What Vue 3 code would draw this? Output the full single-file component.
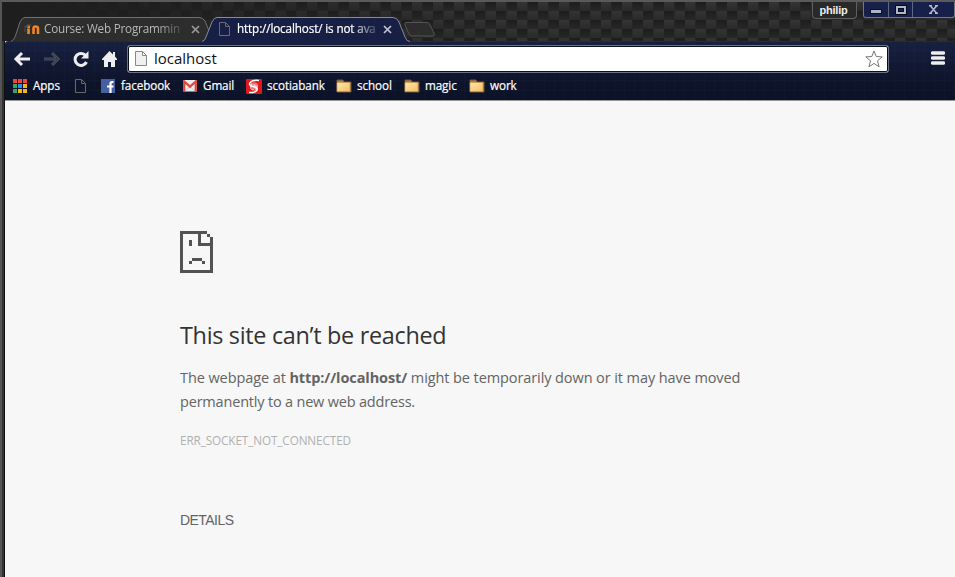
<script setup>
const folders = [
  { name: 'school', width: 68 },
  { name: 'magic', width: 65 },
  { name: 'work', width: 60 },
]
const appColors = ['#f04437', '#f04437', '#f04437', '#35a462', '#2d8cf0', '#f6b417', '#35a462', '#f6b417', '#f6b417']
const error = { title: 'This site can’t be reached', host: 'http://localhost/', code: 'ERR_SOCKET_NOT_CONNECTED' }
</script>

<template>
  <div class="window">
    <header class="titlebar">
      <svg class="weave" width="953" height="39" aria-hidden="true">
        <defs>
          <linearGradient id="dark" x2="0" y2="1"><stop stop-color="#1d1d1d" /><stop offset="1" stop-color="#282828" /></linearGradient>
          <linearGradient id="light" x2="0" y2="1"><stop stop-color="#343434" /><stop offset="1" stop-color="#2a2a2a" /></linearGradient>
          <linearGradient id="shade"><stop stop-color="#1e1e1e" /><stop offset=".12" stop-color="#1e1e1e" stop-opacity=".85" /><stop offset=".5" stop-color="#1e1e1e" stop-opacity="0" /></linearGradient>
          <pattern id="carbon" width="21" height="18" x="11" y="0" patternUnits="userSpaceOnUse">
            <rect width="21" height="18" fill="#252525" />
            <rect width="10.5" height="9" fill="url(#light)" /><rect x="10.5" width="10.5" height="9" fill="url(#dark)" />
            <rect y="9" width="10.5" height="9" fill="url(#dark)" /><rect x="10.5" y="9" width="10.5" height="9" fill="url(#light)" />
          </pattern>
        </defs>
        <rect width="953" height="39" fill="url(#carbon)" />
        <rect width="953" height="39" fill="url(#shade)" />
      </svg>
      <div class="tabs">
        <div class="tab inactive">
          <svg class="tab-shape" width="200" height="25" viewBox="0 0 200 25"><path d="M0 24.5C3 23 4 20 5 17L9 5Q11 .5 14 .5H188Q192 .5 194 4L200 19Q201 23 204 24.5" fill="#2d2d2d" stroke="#707070" /></svg>
          <svg class="moodle" width="17" height="12" viewBox="0 0 17 12"><path d="M1 4 5 1l4 1-4 2Z" fill="#554c43" /><path d="M2 4v5" stroke="#59483a" /><path d="M5.5 11V5.5Q5.5 4 7 4M10.5 11V5.5Q10.5 3.500 12.700 3.500T15 5.500V11" fill="none" stroke="#f58220" stroke-width="2.600" /><path d="M4 5.500h3" stroke="#8b5327" /></svg>
          <span class="tab-title">Course: Web Programmin</span>
          <svg class="close" width="9" height="9" viewBox="0 0 9 9"><path d="m1 1 7 7m0-7-7 7" stroke="#999" stroke-width="1.700" /></svg>
        </div>
        <div class="tab active">
          <svg class="tab-shape" width="209" height="26" viewBox="0 0 209 26"><path d="M0 24.5Q3 24 4 20L10 5Q12 .5 15 .5H191Q195 .5 197 5L203 20Q204 24 208 24.5V26H0Z" fill="#172044" /><path d="M0 24.5Q3 24 4 20L10 5Q12 .5 15 .5H191Q195 .5 197 5L203 20Q204 24 208 24.5" fill="none" stroke="#858b9e" /></svg>
          <svg class="page" width="11" height="14" viewBox="0 0 11 14"><path d="M.5.5h6l4 4v9H.5Zm6 0v4h4" fill="none" stroke="#686b72" /></svg>
          <span class="tab-title">http://localhost/ is not ava</span>
          <svg class="close" width="9" height="9" viewBox="0 0 9 9"><path d="m1 1 7 7m0-7-7 7" stroke="#c0c4d1" stroke-width="1.700" /></svg>
        </div>
        <svg class="new-tab" width="31" height="15" viewBox="0 0 31 15"><path d="M2 .5H23Q25 .5 26 3L30 11Q31 14 29 14H8Q6 14 5 12L1 3Q0 1 2 .5Z" fill="#2d2d2d" stroke="#555" /></svg>
      </div>
      <div class="profile">philip</div>
      <div class="controls">
        <span><svg class="minimize" width="12" height="6"><rect x=".5" y=".5" width="11" height="4" fill="#aeb3c2" stroke="#0a0f22" /></svg></span>
        <span><svg width="12" height="10"><rect x="2" y="2" width="8" height="6" fill="none" stroke="#050b20" stroke-width="4" /><rect x="2" y="2" width="8" height="6" fill="none" stroke="#b2b6c3" stroke-width="2" /></svg></span>
        <span><svg width="11" height="9" viewBox="0 0 11 9"><path d="m2.500 1 6 7M8.500 1l-6 7M1 .8h3m3 0h3M1 8.200h3m3 0h3" stroke="#b2b6c5" stroke-width="1.600" /></svg></span>
      </div>
    </header>

    <section class="chrome">
      <nav class="toolbar">
        <svg class="nav back" width="16" height="14" viewBox="0 0 16 14"><path d="M8 1 2 7l6 6M2 7h14" fill="none" stroke="#eee" stroke-width="3" /></svg>
        <svg class="nav forward" width="16" height="14" viewBox="0 0 16 14"><path d="m8 1 6 6-6 6M0 7h14" fill="none" stroke="#4b5060" stroke-width="3" /><path d="m8 1 6 6-6 6M0 7h14" fill="none" stroke="#303748" /></svg>
        <svg class="nav reload" width="16" height="16" viewBox="0 0 16 16"><path d="M13 5A6 6 0 1 0 13.500 11" fill="none" stroke="#eee" stroke-width="3" /><path d="M15.500 0v7.500H8Z" fill="#eee" /></svg>
        <svg class="nav home" width="15" height="16" viewBox="0 0 15 16"><path d="M0 8 7.500 0 11 3.500V1h2v4.500L15 8v1h-2v7H9v-5H6v5H2V9H0Z" fill="#eee" /></svg>
        <div class="address">
          <svg class="address-page" width="12" height="15" viewBox="0 0 12 15"><path d="M.5.5h7l4 4v10H.5Zm7 0v4h4" fill="#f0f0f0" stroke="#888" /></svg>
          <span class="url">localhost</span>
          <svg class="star" width="18" height="18" viewBox="0 0 18 18"><path d="m9 1 2.200 5.500 6 .4-4.700 3.900 1.600 6L9 13.400 3.900 16.800l1.600-6L.8 6.900l6-.4Z" fill="#fff" stroke="#777" stroke-linejoin="round" /></svg>
        </div>
        <svg class="menu" width="14" height="15"><path d="M1.500 2h11M1.500 7h11M1.500 12h11" stroke="#eee" stroke-width="3.500" stroke-linecap="round" /></svg>
      </nav>
      <nav class="bookmarks">
        <a class="apps"><span class="apps-grid"><i v-for="(color, i) in appColors" :key="i" :style="{ background: color }"></i></span><span class="label">Apps</span></a>
        <a class="blank"><svg width="11" height="14" viewBox="0 0 11 14"><path d="M.5.5h6l4 4v9H.5Zm6 0v4h4" fill="none" stroke="#686868" /></svg></a>
        <a class="facebook"><svg width="14" height="14" viewBox="0 0 14 14"><rect width="14" height="14" fill="#4460a0" /><path d="M12.500 3H11Q9.500 3 9.500 4.500V14M6 7.500h6.500" fill="none" stroke="#fff" stroke-width="2.200" /></svg><span class="label">facebook</span></a>
        <a class="gmail"><svg width="14" height="12" viewBox="0 0 14 12"><rect width="14" height="11.500" rx="1" fill="#eee" /><path d="m2 11 5-4.500L12 11" fill="none" stroke="#ccc" /><path d="M1.200 11.500V1.500L7 6.700l5.800-5.200v10" fill="none" stroke="#dd4b3e" stroke-width="2.300" /></svg><span class="label">Gmail</span></a>
        <a class="scotia"><svg width="16" height="15" viewBox="0 0 16 15"><rect width="16" height="15" rx="1" fill="#e0191f" /><circle cx="8" cy="7.500" r="4" fill="#f4b5b8" /><path d="M13 1.500Q7 .8 4.500 3.200T6 7.500q4 0 5 2t-2.500 3.500q-2 .8-5.500.5" fill="none" stroke="#fff" stroke-width="1.500" /><path d="M6 5q3-1.500 5 1M5 9q3-1 4 2" fill="none" stroke="#e74a50" /></svg><span class="label">scotiabank</span></a>
        <a v-for="folder in folders" :key="folder.name" class="folder" :style="{ width: folder.width + 'px' }">
          <svg width="16" height="14" viewBox="0 0 16 14"><defs><linearGradient id="folder-fill" x2="1" y2="1"><stop stop-color="#ffe9ac" /><stop offset="1" stop-color="#f5bd66" /></linearGradient></defs><path d="M1 3V1h6l1 2h7v10H1Z" fill="#a58558" stroke="#725839" /><path d="M1 3.500h13v9H1Z" fill="url(#folder-fill)" stroke="#c98d45" stroke-width=".6" /></svg>
          <span class="label">{{ folder.name }}</span>
        </a>
      </nav>
    </section>

    <main class="content">
      <svg class="sad-page" width="33" height="42" viewBox="0 0 33 42" shape-rendering="crispEdges"><path d="M0 0h27v3H3v36h27V15H18V3h3v9h9V6h3v36H0ZM27 3h3v3h-3ZM9 9h3v6H9Zm3 18h10v3H12Zm-3 3h3v3H9Zm13 0h3v3h-3Z" fill="#535353" /></svg>
      <h1>{{ error.title }}</h1>
      <p>The webpage at <strong>{{ error.host }}</strong> might be temporarily down or it may have moved<br><span class="second-line">permanently to a new web address.</span></p>
      <div class="code">{{ error.code }}</div>
      <button>DETAILS</button>
    </main>
  </div>
</template>

<style>
body { background: #f7f7f7; }
</style>
<style scoped>
* { box-sizing: border-box; }
.window { width: 955px; height: 577px; overflow: hidden; display: flex; flex-direction: column; padding-left: 5px; background: linear-gradient(90deg, #555 0 2px, #333 2px 4px, #111 4px 5px) left / 5px 100% no-repeat; font-family: "Open Sans", "Noto Sans", sans-serif; white-space: nowrap; }
.titlebar { position: relative; height: 41px; display: flex; flex: none; border-top: 2px solid #5a5a5a; margin-left: -3px; padding-left: 3px; background: #202020; }
.weave { position: absolute; left: 0; top: 0; width: 953px; }
.tabs { position: relative; display: flex; align-items: flex-start; padding: 15px 0 0 6px; width: 807px; }
.tab { position: relative; display: flex; align-items: center; height: 24px; font-size: 11.7px; }
.tab-shape { position: absolute; left: 0; top: 0; overflow: visible; }
.tab > :not(.tab-shape) { position: relative; }
.tab .close { flex: none; }
.inactive { width: 191px; padding-left: 12px; color: #b8b8b8; }
.inactive .tab-title { width: 138px; margin: 0 9px 0 4px; letter-spacing: -.2px; }
.active { width: 203px; padding-left: 17px; color: #fff; z-index: 1; }
.active .tab-title { width: 139px; margin: 0 7px 0 7px; letter-spacing: -.13px; -webkit-text-stroke: .2px #fff; }
.tab-title { mask-image: linear-gradient(90deg, #000 82%, rgba(0,0,0,.2)); line-height: 18px; padding-bottom: 2px; }
.new-tab { margin-top: 5px; margin-left: -1px; }
.profile { position: relative; width: 45px; height: 17px; display: flex; justify-content: center; align-items: center; padding-right: 2px; border: 1px solid #606060; border-top: 0; border-radius: 0 0 4px 4px; background: #292929; color: #eee; font: bold 11px "Liberation Sans", sans-serif; letter-spacing: -.2px; }
.controls { position: relative; display: flex; margin-left: 6px; height: 16px; width: 92px; border: 1px solid #737785; border-top: 0; border-radius: 0 0 3px 3px; background: #17204a; }
.controls span { display: flex; align-items: center; justify-content: center; width: 25px; border-right: 1px solid #606781; }
.controls span:last-child { width: 41px; border: 0; }
.controls .minimize { margin-top: 4px; }
.chrome { height: 60px; flex: none; border-top: 1px solid #202a4c; border-bottom: 1px solid #999; background: repeating-linear-gradient(90deg, transparent 0 9px, rgba(100,120,170,.04) 9px 10px), repeating-linear-gradient(0deg, transparent 0 9px, rgba(100,120,170,.04) 9px 10px), linear-gradient(#172040, #0e152c 60%, #0c1226); border-radius: 3px 0 0; }
.toolbar { display: flex; align-items: center; height: 33px; padding-left: 9px; }
.nav { overflow: visible; flex: none; }
.forward { margin-left: 14px; }
.reload { margin-left: 13px; }
.home { margin-left: 13px; }
.address { display: flex; align-items: center; flex: none; width: 762px; height: 28px; margin-left: 10px; padding: 0 5px 0 7px; border: 1px solid #697087; outline: 1px solid #0a0f20; outline-offset: -2px; border-radius: 3px; background: #fff; color: #111; font-size: 15px; }
.url { margin: 0 0 2px 7px; line-height: 20px; }
.star { margin-left: auto; }
.menu { margin-left: 42px; flex: none; }
.bookmarks { display: flex; align-items: center; height: 22px; padding-left: 8px; color: #fff; font-size: 11.7px; line-height: 18px; letter-spacing: -.1px; -webkit-text-stroke: .2px #fff; }
.bookmarks a { display: flex; align-items: center; flex: none; }
.label { padding-bottom: 2px; }
.apps { width: 62px; gap: 6px; }
.apps-grid { display: grid; grid-template-columns: repeat(3, 4px); grid-auto-rows: 4px; gap: 1px; width: 14px; }
.blank { width: 26px; }
.facebook { width: 82px; gap: 6px; }
.gmail { width: 63px; gap: 6px; }
.scotia { width: 90px; gap: 5px; }
.folder { gap: 5px; }
.content { flex: 1; padding: 130px 0 0 175px; background: #f7f7f7; color: #646464; }
.sad-page { display: block; }
h1 { margin: 47px 0 0; font-size: 23.4px; font-weight: 400; line-height: 31px; letter-spacing: -.3px; color: #333; }
p { margin: 15px 0 0; font-size: 14.5px; line-height: 24px; letter-spacing: -.09px; }
strong { letter-spacing: -.1px; }
.second-line { letter-spacing: -.19px; }
.code { margin-top: 17px; font-size: 11.7px; line-height: 18px; letter-spacing: -.08px; color: #b0b0b0; }
button { display: block; margin: 61px 0 0; padding: 0; border: 0; background: none; color: #646464; font: 14px/20px "Liberation Sans", sans-serif; letter-spacing: -.55px; }
</style>
